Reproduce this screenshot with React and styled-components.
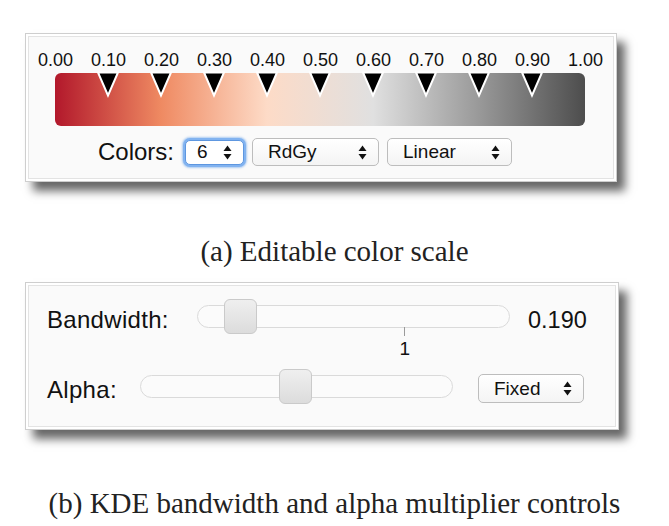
import styled, { createGlobalStyle, css } from "styled-components";

const GlobalStyle = createGlobalStyle`
  body {
    margin: 0;
    background: #fff;
    font-family: "Liberation Sans", Arial, sans-serif;
    color: #111;
  }
`;

const Page = styled.div`
  width: 669px;
  display: flex;
  flex-direction: column;
`;

const Frame = styled.div`
  box-sizing: border-box;
  margin-top: ${(p) => p.$top}px;
  margin-left: 25px;
  width: ${(p) => p.$width}px;
  height: ${(p) => p.$height}px;
  padding: 2px;
  background: #fff;
  border: 1px solid #cecece;
  box-shadow: 8px 9px 9px rgba(0, 0, 0, 0.6);
`;

const FrameInner = styled.div`
  box-sizing: border-box;
  height: 100%;
  background: #fafafa;
  border: 1px solid #e3e3e3;
  display: flex;
  flex-direction: column;
`;

const Caption = styled.div`
  margin-top: ${(p) => p.$top}px;
  font-family: "Liberation Serif", "Times New Roman", serif;
  font-size: 29px;
  line-height: 34px;
  text-align: center;
  color: #222;
`;

/* ---- color scale ---- */

const TickLabels = styled.div`
  display: grid;
  grid-template-columns: repeat(11, 53px);
  margin-top: 13px;
  font-size: 18px;
  line-height: 20px;
  text-align: center;
`;

const ScaleBar = styled.div`
  position: relative;
  margin: 3px 0 0 26px;
  width: 530px;
  height: 53px;
  border-radius: 6px;
  background: linear-gradient(
    to right,
    #b2182b 0%,
    #ef8a62 20%,
    #fddbc7 40%,
    #e0e0e0 60%,
    #999999 80%,
    #4d4d4d 100%
  );
`;

const Handle = styled.svg`
  position: absolute;
  top: -2px;
  width: 24px;
  height: 27px;
`;

const Controls = styled.div`
  display: flex;
  align-items: center;
  gap: 8px;
  margin: 12px 0 0 69px;
`;

const FieldLabel = styled.span`
  font-size: 24px;
  line-height: 28px;
  letter-spacing: ${(p) => p.$spacing || 0}px;
  margin-right: ${(p) => p.$gap || 0}px;
  ${(p) =>
    p.$width &&
    css`
      flex: 0 0 ${p.$width}px;
    `}
  ${(p) =>
    p.$drop &&
    css`
      padding-top: ${p.$drop}px;
    `}
`;

const SelectBox = styled.div`
  box-sizing: border-box;
  display: flex;
  align-items: center;
  justify-content: space-between;
  width: ${(p) => p.$width}px;
  height: ${(p) => p.$height || 28}px;
  padding: 0 11px 0 15px;
  font-size: 19px;
  border: 1px solid #bdbdbd;
  border-radius: 5px;
  background: linear-gradient(#ffffff, #f4f4f4);
  ${(p) =>
    p.$focused &&
    css`
      padding-left: 11px;
      border: 1px solid #5e97e0;
      background: #fff;
      box-shadow: 0 0 0 2px #82b3f0, 0 0 2px 3px rgba(110, 165, 235, 0.55);
    `}
`;

const Arrows = () => (
  <svg width="9" height="15" viewBox="0 0 9 15">
    <polygon points="0.5,6 4.5,0.5 8.5,6" fill="#111" />
    <polygon points="0.5,9 8.5,9 4.5,14.5" fill="#111" />
  </svg>
);

const Select = ({ children, ...rest }) => (
  <SelectBox {...rest}>
    <span>{children}</span>
    <Arrows />
  </SelectBox>
);

/* ---- sliders ---- */

const SliderRow = styled.div`
  display: flex;
  align-items: center;
  height: 36px;
  padding-left: 18px;
  margin-top: ${(p) => p.$top}px;
`;

const Track = styled.div`
  position: relative;
  box-sizing: border-box;
  flex: 0 0 313px;
  height: 23px;
  border: 1px solid #dadada;
  border-radius: 12px;
  background: #fbfbfb;
`;

const Thumb = styled.div`
  position: absolute;
  top: -7px;
  box-sizing: border-box;
  width: 33px;
  height: 35px;
  border: 1px solid #cacaca;
  border-radius: 6px;
  background: linear-gradient(#efefef, #dcdcdc);
`;

const Tick = styled.div`
  position: absolute;
  top: 100%;
  display: flex;
  flex-direction: column;
  align-items: center;
  width: 20px;
  margin-left: -10px;
  font-size: 19px;
  line-height: 26px;
`;

const TickLine = styled.div`
  width: 1px;
  height: 9px;
  background: #9a9a9a;
`;

const Value = styled.span`
  margin-left: 18px;
  padding-top: 8px;
  font-size: 23.5px;
  line-height: 28px;
`;

const SelectSlot = styled.div`
  margin: 5px 0 0 25px;
`;

const Slider = ({ value, tick }) => (
  <Track>
    {tick != null && (
      <Tick style={{ left: `${tick * 100}%` }}>
        <TickLine />
        1
      </Tick>
    )}
    <Thumb style={{ left: `calc((100% - 33px) * ${value})` }} />
  </Track>
);

const ticks = [0, 0.1, 0.2, 0.3, 0.4, 0.5, 0.6, 0.7, 0.8, 0.9, 1];

const App = () => {
  return (
    <Page>
      <GlobalStyle />
      <Frame $top={33} $width={592} $height={149}>
        <FrameInner>
          <TickLabels>
            {ticks.map((t) => (
              <span key={t}>{t.toFixed(2)}</span>
            ))}
          </TickLabels>
          <ScaleBar>
            {ticks.slice(1, -1).map((t) => (
              <Handle
                key={t}
                viewBox="0 0 24 27"
                style={{ left: `calc(${t * 100}% - 12px)` }}
              >
                <polygon
                  points="2,1.5 22,1.5 12,24.5"
                  fill="#000"
                  stroke="#fff"
                  strokeWidth="2"
                  strokeLinejoin="miter"
                />
              </Handle>
            ))}
          </ScaleBar>
          <Controls>
            <FieldLabel $gap={3}>Colors:</FieldLabel>
            <Select $width={59} $height={25} $focused>
              6
            </Select>
            <Select $width={127}>RdGy</Select>
            <Select $width={125}>Linear</Select>
          </Controls>
        </FrameInner>
      </Frame>
      <Caption $top={52}>(a) Editable color scale</Caption>
      <Frame $top={14} $width={594} $height={148}>
        <FrameInner>
          <SliderRow $top={12}>
            <FieldLabel $width={150} $drop={8} $spacing={0.3}>
              Bandwidth:
            </FieldLabel>
            <Slider value={0.093} tick={0.665} />
            <Value>0.190</Value>
          </SliderRow>
          <SliderRow $top={34}>
            <FieldLabel $width={93} $drop={8} $spacing={0.3}>
              Alpha:
            </FieldLabel>
            <Slider value={0.496} />
            <SelectSlot>
              <Select $width={106} $height={29}>
                Fixed
              </Select>
            </SelectSlot>
          </SliderRow>
        </FrameInner>
      </Frame>
      <Caption $top={56}>(b) KDE bandwidth and alpha multiplier controls</Caption>
    </Page>
  );
};

export default App;
